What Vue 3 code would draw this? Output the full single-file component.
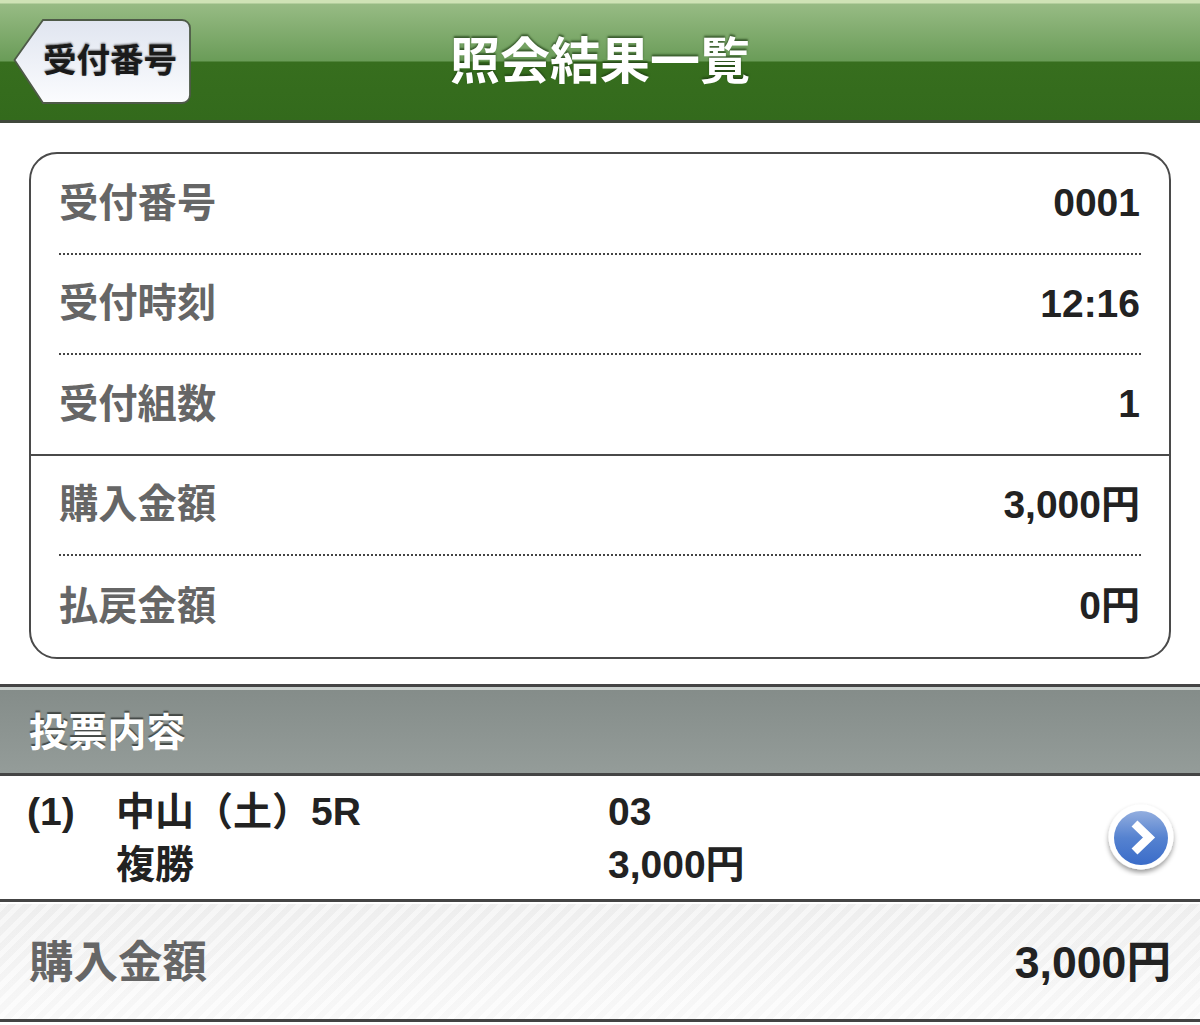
<template>
  <div class="page">
    <header class="topbar">
      <a class="back">
        <svg class="back-shape" viewBox="0 0 178 86" width="178" height="86">
          <defs>
            <linearGradient id="backFill" x1="0" y1="0" x2="0" y2="1">
              <stop offset="0" stop-color="#e0e5f0" />
              <stop offset="1" stop-color="#fbfcfe" />
            </linearGradient>
          </defs>
          <path d="M30 1H169a8 8 0 0 1 8 8V76a8 8 0 0 1-8 8H30L1.500 41Z" fill="url(#backFill)" stroke="#4e5a48" stroke-width="1.800" />
        </svg>
        <span class="back-text">受付番号</span>
      </a>
      <h1 class="title">照会結果一覧</h1>
    </header>

    <section class="card">
      <div v-for="row in rows" :key="row.label" :class="['row', row.line]">
        <span class="row-label">{{ row.label }}</span>
        <span class="row-value">{{ row.value }}</span>
      </div>
    </section>

    <h2 class="section-head">投票内容</h2>

    <div class="bet">
      <span class="bet-no">(1)</span>
      <div class="bet-race">
        <div>中山（土）5R</div>
        <div>複勝</div>
      </div>
      <div class="bet-num">
        <div>03</div>
        <div>3,000円</div>
      </div>
      <svg class="arrow" viewBox="0 0 76 76" width="76" height="76">
        <defs>
          <linearGradient id="arrowFill" x1="0" y1="0" x2="0" y2="1">
            <stop offset="0" stop-color="#93aedf" />
            <stop offset="0.5" stop-color="#5582d0" />
            <stop offset="1" stop-color="#3a6cc9" />
          </linearGradient>
          <filter id="arrowShadow" x="-20%" y="-20%" width="140%" height="140%">
            <feDropShadow dx="0" dy="3" stdDeviation="2.500" flood-color="#000" flood-opacity="0.4" />
          </filter>
        </defs>
        <circle cx="38" cy="37" r="32.500" fill="#fff" filter="url(#arrowShadow)" />
        <circle cx="38" cy="38" r="27" fill="url(#arrowFill)" />
        <path d="M31.500 23.500L46 37.500L31.500 51.500" fill="none" stroke="#fff" stroke-width="8.500" />
      </svg>
    </div>

    <footer class="total">
      <span class="total-label">購入金額</span>
      <span class="total-value">3,000円</span>
    </footer>
  </div>
</template>

<script setup>
const rows = [
  { label: '受付番号', value: '0001', line: 'dotted' },
  { label: '受付時刻', value: '12:16', line: 'dotted' },
  { label: '受付組数', value: '1', line: 'solid' },
  { label: '購入金額', value: '3,000円', line: 'dotted' },
  { label: '払戻金額', value: '0円', line: '' }
]
</script>

<style>
html,
body {
  margin: 0;
  background: #fff;
}
</style>

<style scoped>
.page {
  width: 1200px;
  height: 1025px;
  overflow: hidden;
  background: #fff;
  font-family: "Liberation Sans", "Noto Sans CJK JP", sans-serif;
  font-weight: 700;
  color: #222;
}

.topbar {
  position: relative;
  display: flex;
  align-items: center;
  justify-content: center;
  height: 120px;
  border-bottom: 3px solid #40483c;
  background: linear-gradient(#cfe3b6 0, #cfe3b6 3px, #97bb84 4px, #6a9c58 61px, #376e1e 62px, #336a1c 100%);
}

.back {
  position: absolute;
  left: 13px;
  top: 19px;
  width: 178px;
  height: 86px;
}

.back-shape {
  display: block;
}

.back-text {
  position: absolute;
  left: 30px;
  top: 22px;
  font-size: 33.500px;
  line-height: 40px;
  color: #1a1a1a;
  text-shadow: 0 -1px 2px rgba(0, 0, 0, 0.55);
  white-space: nowrap;
}

.title {
  margin: 3px 0 0;
  font-size: 50px;
  line-height: 60px;
  font-weight: 700;
  color: #fff;
  text-shadow: 0 -2px 2px rgba(30, 60, 20, 0.7);
}

.card {
  margin: 29px 29px 0;
  border: 2px solid #4a4a4a;
  border-radius: 28px;
  padding: 0 28px;
}

.row {
  display: flex;
  align-items: center;
  justify-content: space-between;
  height: 100.500px;
  box-sizing: border-box;
}

.row.dotted {
  border-bottom: 2px dotted #444;
}

.row.solid {
  margin: 0 -28px;
  padding: 0 28px;
  border-bottom: 2px solid #4a4a4a;
}

.row-label {
  padding-bottom: 8px;
  font-size: 39.300px;
  color: #666;
}

.row-value {
  padding-right: 1px;
  font-size: 39px;
  line-height: 46px;
  color: #222;
}

.section-head {
  display: flex;
  align-items: center;
  box-sizing: border-box;
  height: 92px;
  margin: 25.500px 0 0;
  padding: 0 29px 2px;
  border-top: 3px solid #444;
  border-bottom: 3px solid #444;
  box-shadow: inset 0 3px 0 #c9cfcc;
  background: linear-gradient(#848c89, #949c99);
  font-size: 39.200px;
  font-weight: 700;
  color: #fff;
  text-shadow: 0 -2px 1px rgba(50, 55, 52, 0.8);
}

.bet {
  position: relative;
  display: flex;
  height: 123px;
  box-sizing: border-box;
  padding: 9px 0 0 27px;
  font-size: 39px;
  line-height: 53px;
  color: #222;
}

.bet-no {
  width: 89px;
}

.bet-race {
  width: 492px;
}

.arrow {
  position: absolute;
  left: 1103px;
  top: 24px;
}

.total {
  display: flex;
  align-items: center;
  justify-content: space-between;
  box-sizing: border-box;
  height: 123px;
  padding: 0 29px 4px;
  border-top: 3px solid #444;
  border-bottom: 3px solid #444;
  box-shadow: inset 0 2px 0 #fff;
  background:
    repeating-linear-gradient(-45deg, rgba(255, 255, 255, 0.45) 0 5px, rgba(235, 235, 235, 0.2) 5px 11px),
    linear-gradient(#eeeeee, #fbfbfb);
}

.total-label {
  font-size: 44.500px;
  color: #666;
}

.total-value {
  font-size: 44.600px;
  color: #222;
}
</style>
